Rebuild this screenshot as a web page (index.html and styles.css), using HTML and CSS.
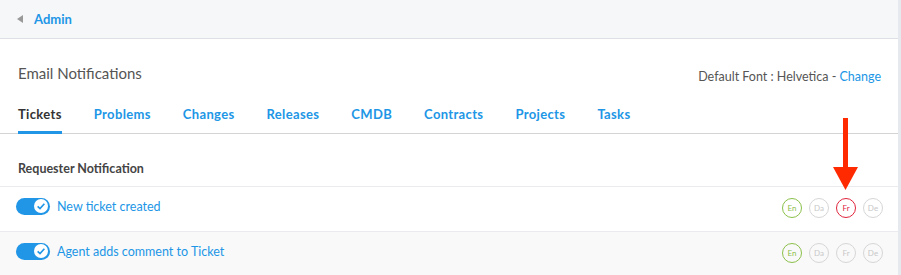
FILE: index.html
```html
<!DOCTYPE html>
<html lang="en">
<head>
    <meta charset="UTF-8">
    <title>Email Notifications</title>
    <link rel="stylesheet" href="styles.css">
</head>
<body>
    <div class="app">
        <div class="topbar">
            <span class="back-caret"></span>
            <a class="back-link" href="#">Admin</a>
        </div>

        <div class="page-head">
            <h1>Email Notifications</h1>
            <p class="font-info">Default Font : Helvetica - <a href="#">Change</a></p>
        </div>

        <nav class="tabs">
            <a class="tab active" href="#">Tickets</a>
            <a class="tab" href="#">Problems</a>
            <a class="tab" href="#">Changes</a>
            <a class="tab" href="#">Releases</a>
            <a class="tab" href="#">CMDB</a>
            <a class="tab" href="#">Contracts</a>
            <a class="tab" href="#">Projects</a>
            <a class="tab" href="#">Tasks</a>
        </nav>

        <h2 class="section-title">Requester Notification</h2>

        <div class="row">
            <span class="toggle"><span class="knob"><svg viewBox="0 0 10 10"><path d="M2.6 5.2 L4.3 6.8 L7.4 3.4"/></svg></span></span>
            <a class="row-label" href="#">New ticket created</a>
            <div class="langs">
                <span class="lang on">En</span>
                <span class="lang">Da</span>
                <span class="lang warn">Fr</span>
                <span class="lang">De</span>
            </div>
        </div>

        <div class="row alt">
            <span class="toggle"><span class="knob"><svg viewBox="0 0 10 10"><path d="M2.6 5.2 L4.3 6.8 L7.4 3.4"/></svg></span></span>
            <a class="row-label" href="#">Agent adds comment to Ticket</a>
            <div class="langs">
                <span class="lang on">En</span>
                <span class="lang">Da</span>
                <span class="lang">Fr</span>
                <span class="lang">De</span>
            </div>
        </div>

        <!-- annotation arrow pointing at the French template -->
        <svg class="pointer" width="26" height="74" viewBox="0 0 26 74">
            <rect x="10" y="0" width="5" height="52" fill="#ff2a00"/>
            <polygon points="0,49 25,49 12.5,72" fill="#ff2a00"/>
        </svg>
    </div>
</body>
</html>
```

FILE: styles.css
```css
:root {
    --blue: #2196e6;
    --text: #4a4a4a;
    --line: #e9ebee;
}

* {
    margin: 0;
    padding: 0;
    box-sizing: border-box;
}

body {
    font-family: Lato, "Open Sans", sans-serif;
    background: #e6e9ed;
    color: var(--text);
}

a {
    color: var(--blue);
    text-decoration: none;
}

.app {
    position: relative;
    width: 898px;
    height: 275px;
    background: #fff;
    overflow: hidden;
}

.topbar {
    height: 39px;
    display: flex;
    align-items: center;
    padding-left: 17px;
    background: #f6f7f9;
    border-bottom: 1px solid #dde1e6;
}

.back-caret {
    width: 0;
    height: 0;
    border-top: 4px solid transparent;
    border-bottom: 4px solid transparent;
    border-right: 6px solid #999;
    margin-right: 11px;
}

.back-link {
    font-size: 13px;
    font-weight: 700;
}

.page-head {
    display: flex;
    justify-content: space-between;
    align-items: flex-end;
    padding: 25px 17px 0 18px;
}

.page-head h1 {
    font-size: 15px;
    font-weight: 400;
    color: #555;
}

.font-info {
    font-size: 12.5px;
    color: #555;
    margin-bottom: -2px;
}

.tabs {
    display: flex;
    gap: 32px;
    margin-top: 24px;
    padding-left: 18px;
    border-bottom: 1px solid #d4d4d4;
}

.tab {
    font-size: 13px;
    font-weight: 700;
    letter-spacing: 0.35px;
    padding-bottom: 9px;
    border-bottom: 3px solid transparent;
    margin-bottom: -1px;
}

.tab.active {
    color: #333;
    border-bottom-color: var(--blue);
}

.section-title {
    font-size: 12.5px;
    font-weight: 700;
    color: #444;
    padding: 27px 18px 10px;
    border-bottom: 1px solid var(--line);
}

.row {
    display: flex;
    align-items: center;
    height: 45px;
    padding: 0 16px 6px;
    border-bottom: 1px solid var(--line);
}

.row.alt {
    background: #f9f9f9;
}

.toggle {
    display: flex;
    align-items: center;
    justify-content: flex-end;
    width: 34px;
    height: 17px;
    padding-right: 2px;
    border-radius: 9px;
    background: var(--blue);
}

.knob {
    display: flex;
    width: 14px;
    height: 14px;
    border-radius: 50%;
    background: #fff;
}

.knob svg {
    width: 14px;
    height: 14px;
    fill: none;
    stroke: var(--blue);
    stroke-width: 1.2;
}

.row-label {
    margin-left: 7px;
    font-size: 12.5px;
}

.langs {
    display: flex;
    gap: 7px;
    margin: 3px -1px 0 auto;
}

.lang {
    display: flex;
    align-items: center;
    justify-content: center;
    width: 20px;
    height: 20px;
    border-radius: 50%;
    border: 1px solid #d6d6d6;
    font-size: 8px;
    color: #c8c8c8;
}

.lang.on {
    border-color: #8cc04b;
    color: #8cc04b;
}

.lang.warn {
    border-color: #e0243c;
    color: #e0243c;
}

.pointer {
    position: absolute;
    left: 833px;
    top: 118px;
}
```
